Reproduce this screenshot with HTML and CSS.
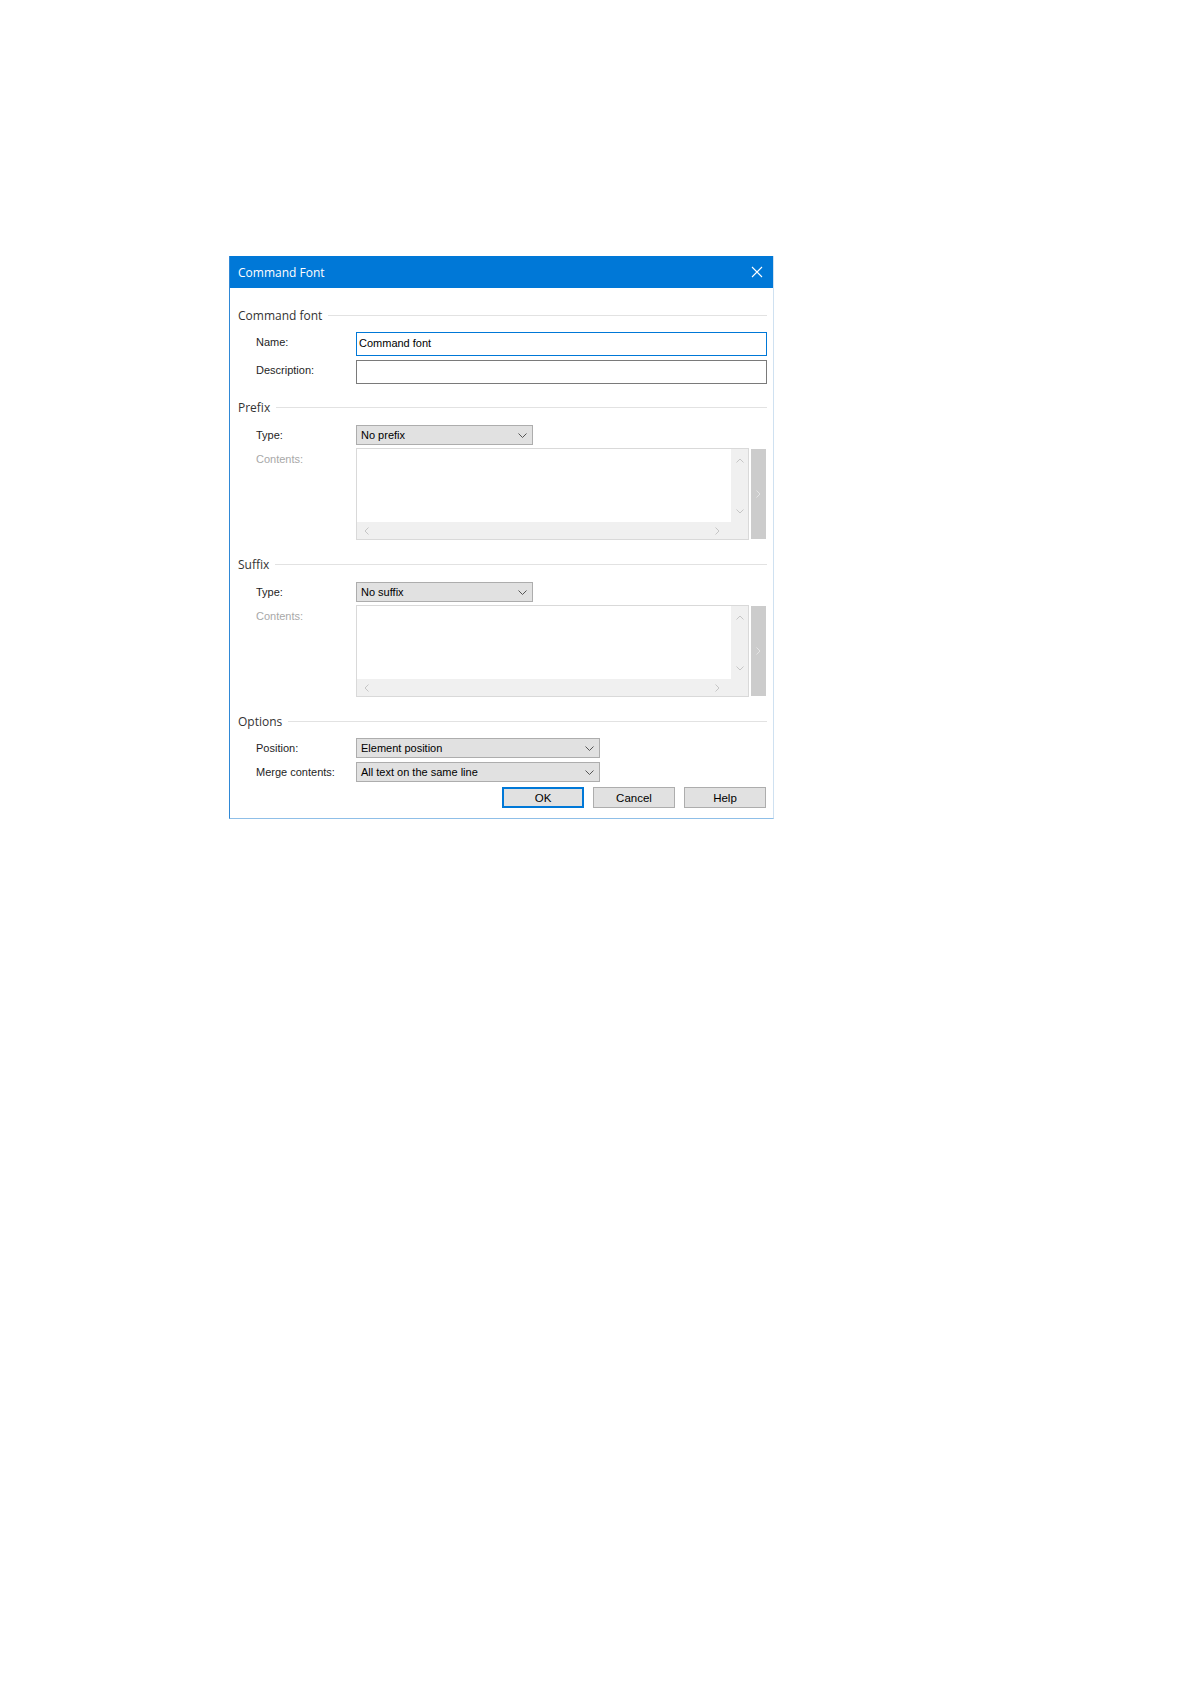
FILE: index.html
```html
<!DOCTYPE html>
<html lang="en">
  <head>
    <meta charset="UTF-8" />
    <meta name="viewport" content="width=device-width, initial-scale=1.0" />
    <title>Command Font</title>
    <link rel="stylesheet" href="styles.css">
  </head>

  <body>
    <div class="page">
      <div class="dialog">
        <div class="titlebar">
          <span class="title">Command Font</span>
          <svg class="close" width="12" height="12" viewBox="0 0 12 12">
            <path d="M1 1 L11 11 M11 1 L1 11" stroke="#fff" stroke-width="1.1" fill="none" />
          </svg>
        </div>

        <div class="body">
          <!-- command font -->
          <div class="group-head"><span>Command font</span></div>
          <div class="rows rows-1">
            <div class="row row-input">
              <label class="label">Name:</label>
              <div class="input input-focus">Command font</div>
            </div>
            <div class="row row-input">
              <label class="label">Description:</label>
              <div class="input"></div>
            </div>
          </div>

          <!-- prefix -->
          <div class="group-head group-2"><span>Prefix</span></div>
          <div class="rows rows-2">
            <div class="row">
              <label class="label">Type:</label>
              <div class="select select-short">
                <span>No prefix</span>
                <svg width="9" height="5" viewBox="0 0 9 5"><path d="M0.5 0.5 L4.5 4.5 L8.5 0.5" stroke="#555" fill="none" /></svg>
              </div>
            </div>
            <div class="row row-top">
              <label class="label label-off">Contents:</label>
              <div class="memo-wrap">
                <div class="memo">
                  <div class="memo-text"></div>
                  <div class="vscroll">
                    <svg width="8" height="5" viewBox="0 0 8 5"><path d="M0.5 4.5 L4 1 L7.5 4.5" stroke="#c6c6c6" fill="none" /></svg>
                    <svg width="8" height="5" viewBox="0 0 8 5"><path d="M0.5 0.5 L4 4 L7.5 0.5" stroke="#c6c6c6" fill="none" /></svg>
                  </div>
                  <div class="hscroll">
                    <svg width="5" height="8" viewBox="0 0 5 8"><path d="M4.5 0.5 L1 4 L4.5 7.5" stroke="#c6c6c6" fill="none" /></svg>
                    <svg width="5" height="8" viewBox="0 0 5 8"><path d="M0.5 0.5 L4 4 L0.5 7.5" stroke="#c6c6c6" fill="none" /></svg>
                  </div>
                  <div class="corner"></div>
                </div>
                <div class="side">
                  <svg width="5" height="8" viewBox="0 0 5 8"><path d="M0.5 0.5 L4 4 L0.5 7.5" stroke="#e4e4e4" fill="none" /></svg>
                </div>
              </div>
            </div>
          </div>

          <!-- suffix -->
          <div class="group-head group-3"><span>Suffix</span></div>
          <div class="rows rows-2">
            <div class="row">
              <label class="label">Type:</label>
              <div class="select select-short">
                <span>No suffix</span>
                <svg width="9" height="5" viewBox="0 0 9 5"><path d="M0.5 0.5 L4.5 4.5 L8.5 0.5" stroke="#555" fill="none" /></svg>
              </div>
            </div>
            <div class="row row-top">
              <label class="label label-off">Contents:</label>
              <div class="memo-wrap">
                <div class="memo">
                  <div class="memo-text"></div>
                  <div class="vscroll">
                    <svg width="8" height="5" viewBox="0 0 8 5"><path d="M0.5 4.5 L4 1 L7.5 4.5" stroke="#c6c6c6" fill="none" /></svg>
                    <svg width="8" height="5" viewBox="0 0 8 5"><path d="M0.5 0.5 L4 4 L7.5 0.5" stroke="#c6c6c6" fill="none" /></svg>
                  </div>
                  <div class="hscroll">
                    <svg width="5" height="8" viewBox="0 0 5 8"><path d="M4.5 0.5 L1 4 L4.5 7.5" stroke="#c6c6c6" fill="none" /></svg>
                    <svg width="5" height="8" viewBox="0 0 5 8"><path d="M0.5 0.5 L4 4 L0.5 7.5" stroke="#c6c6c6" fill="none" /></svg>
                  </div>
                  <div class="corner"></div>
                </div>
                <div class="side">
                  <svg width="5" height="8" viewBox="0 0 5 8"><path d="M0.5 0.5 L4 4 L0.5 7.5" stroke="#e4e4e4" fill="none" /></svg>
                </div>
              </div>
            </div>
          </div>

          <!-- options -->
          <div class="group-head group-3"><span>Options</span></div>
          <div class="rows rows-1">
            <div class="row">
              <label class="label">Position:</label>
              <div class="select select-long">
                <span>Element position</span>
                <svg width="9" height="5" viewBox="0 0 9 5"><path d="M0.5 0.5 L4.5 4.5 L8.5 0.5" stroke="#555" fill="none" /></svg>
              </div>
            </div>
            <div class="row">
              <label class="label">Merge contents:</label>
              <div class="select select-long">
                <span>All text on the same line</span>
                <svg width="9" height="5" viewBox="0 0 9 5"><path d="M0.5 0.5 L4.5 4.5 L8.5 0.5" stroke="#555" fill="none" /></svg>
              </div>
            </div>
          </div>

          <div class="buttons">
            <div class="btn btn-default">OK</div>
            <div class="btn">Cancel</div>
            <div class="btn">Help</div>
          </div>
        </div>
      </div>
    </div>
  </body>
</html>
```

FILE: styles.css
```css
* {
  box-sizing: border-box;
}
body {
  margin: 0;
  background: #fff;
  font-family: "Liberation Sans", Arial, sans-serif;
  font-size: 11px;
  color: #1e1e1e;
}

.page {
  padding: 256px 0 0 229px;
}

.dialog {
  width: 545px;
  background: #fff;
  border-left: 1px solid #2f88d6;
  border-right: 1px solid #cfe1f1;
  border-bottom: 1px solid #8fbfe8;
}

.titlebar {
  height: 32px;
  background: #0078d7;
  display: flex;
  align-items: center;
  justify-content: space-between;
  padding: 0 10px 0 8px;
  color: #fff;
}
.title {
  font-family: "Open Sans", "Noto Sans", sans-serif;
  font-size: 12px;
}

.body {
  padding: 19px 6px 10px 8px;
}

.group-head {
  height: 16px;
  display: flex;
  align-items: center;
  gap: 6px;
  font-family: "Open Sans", "Noto Sans", sans-serif;
  font-size: 12px;
  color: #333;
}
.group-head::after {
  content: "";
  flex: 1;
  height: 1px;
  background: #e2e2e2;
}
.group-2 {
  margin-top: 15px;
}
.group-3 {
  margin-top: 16px;
}

.rows {
  display: flex;
  flex-direction: column;
  padding-left: 18px;
}
.rows-1 {
  margin-top: 9px;
  gap: 4px;
}
.rows-2 {
  margin-top: 10px;
  gap: 3px;
}

.row {
  display: grid;
  grid-template-columns: 100px 1fr;
  align-items: center;
}
.row-input .label {
  padding-bottom: 4px;
}
.row-top {
  align-items: start;
}
.row-top .label {
  padding-top: 5px;
}

.label {
  white-space: nowrap;
}
.label-off {
  color: #a8a8a8;
}

.input {
  height: 24px;
  border: 1px solid #7a7a7a;
  padding: 0 2px;
  line-height: 20px;
  color: #000;
}
.input-focus {
  border-color: #0078d7;
}

.select {
  height: 20px;
  background: #e1e1e1;
  border: 1px solid #adadad;
  display: flex;
  align-items: center;
  justify-content: space-between;
  padding: 0 5px 0 4px;
  color: #000;
}
.select-short {
  width: 177px;
}
.select-long {
  width: 244px;
}

.memo-wrap {
  display: flex;
  gap: 2px;
  height: 92px;
  padding-right: 1px;
}
.memo {
  flex: 1;
  border: 1px solid #d9d9d9;
  display: grid;
  grid-template-columns: 1fr 17px;
  grid-template-rows: 1fr 17px;
}
.memo-text {
  background: #fff;
}
.vscroll {
  background: #f0f0f0;
  display: flex;
  flex-direction: column;
  justify-content: space-between;
  align-items: center;
  padding: 9px 0 8px;
}
.hscroll {
  background: #f0f0f0;
  display: flex;
  justify-content: space-between;
  align-items: center;
  padding: 0 11px 0 7px;
}
.corner {
  background: #f0f0f0;
}
.side {
  width: 15px;
  margin: 1px 0;
  background: #cccccc;
  display: flex;
  align-items: center;
  justify-content: center;
}

.buttons {
  margin-top: 5px;
  display: flex;
  justify-content: flex-end;
  gap: 9px;
  padding-right: 1px;
}
.btn {
  width: 82px;
  height: 21px;
  background: #e1e1e1;
  border: 1px solid #adadad;
  display: flex;
  align-items: center;
  justify-content: center;
  font-size: 11.5px;
  color: #000;
}
.btn-default {
  border: 2px solid #0078d7;
}
```
